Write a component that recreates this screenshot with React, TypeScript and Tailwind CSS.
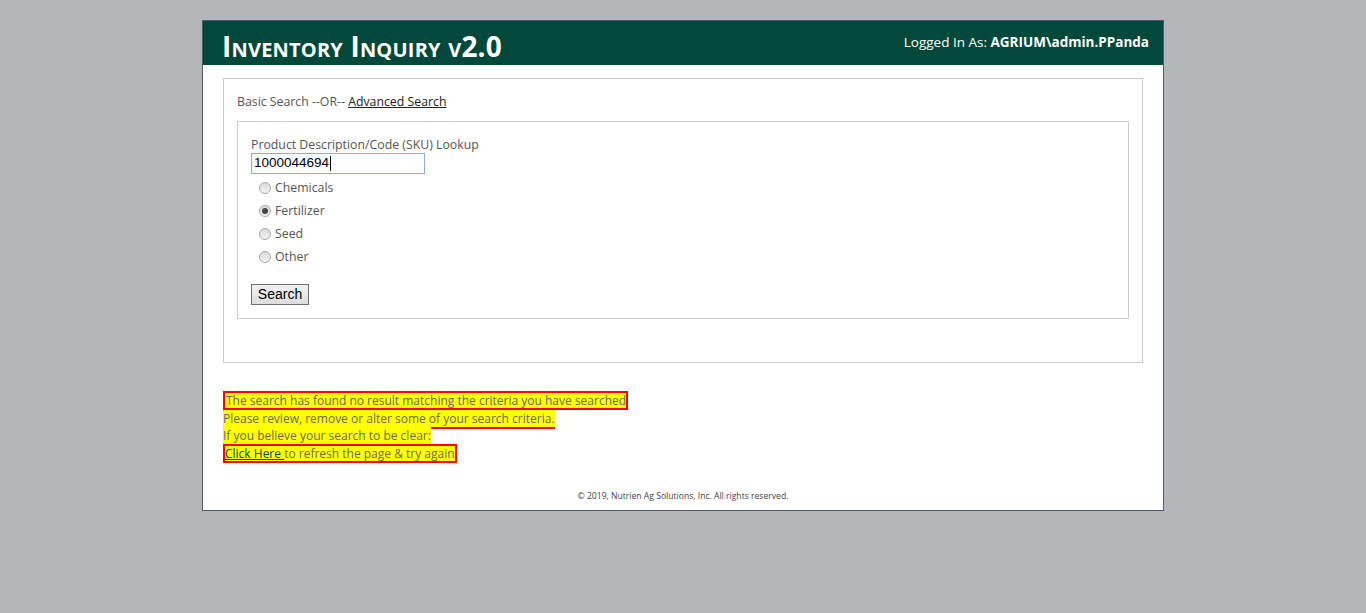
import React from 'react';

const options = ['Chemicals', 'Fertilizer', 'Seed', 'Other'];

const Radio = ({ checked }: { checked: boolean }) => (
  <span className="inline-flex h-[12px] w-[12px] items-center justify-center rounded-full border border-[#a8a8a8] bg-gradient-to-b from-[#d9d9d9] to-[#f4f4f4]">
    {checked && <span className="h-[6px] w-[6px] rounded-full bg-[#444]" />}
  </span>
);

export default function App() {
  return (
    <div className="min-h-[613px] bg-[#b5b6ba] pt-[20px] font-['Open_Sans',sans-serif]">
      <div className="mx-auto w-[962px] border border-[#4b5d76] bg-white">
        {/* header */}
        <div className="flex h-[44px] items-start justify-between bg-[#00483a] pl-[19px] pr-[14px] text-white">
          <h1 className="mt-[9px] text-[28px] font-bold leading-[32px] tracking-[0.2px] [font-variant:small-caps]">
            Inventory Inquiry v2.0
          </h1>
          <div className="mt-[11px] text-[13.5px] leading-[20px]">
            Logged In As: <span className="font-bold">AGRIUM\admin.PPanda</span>
          </div>
        </div>

        <div className="px-[20px] pt-[13px]">
          <div className="h-[285px] border border-[#cccccc] px-[13px] pt-[13px] text-[12.3px] text-[#555]">
            <div className="h-[29px] leading-[20px]">
              Basic Search --OR--{' '}
              <a className="text-[#222] underline">Advanced Search</a>
            </div>
            <div className="h-[198px] border border-[#cccccc] px-[13px] pt-[14px]">
              <div className="leading-[17px]">Product Description/Code (SKU) Lookup</div>
              <div className="flex h-[21px] w-[174px] items-center border border-[#7eb4ea] px-[2px] font-['Liberation_Sans',sans-serif] text-[13.5px] text-black">
                1000044694<span className="ml-[1px] h-[15px] w-px bg-black" />
              </div>
              <div className="mt-[2px] flex flex-col pl-[8px]">
                {options.map((o) => (
                  <label key={o} className="flex h-[23px] items-center gap-[4px]">
                    <Radio checked={o === 'Fertilizer'} />
                    <span className="pt-[1px]">{o}</span>
                  </label>
                ))}
              </div>
              <button className="mt-[16px] h-[21px] w-[58px] border border-[#707070] bg-gradient-to-b from-[#f2f2f2] to-[#dddddd] font-['Liberation_Sans',sans-serif] text-[14px] leading-[19px] text-black">
                Search
              </button>
            </div>
          </div>
        </div>

        {/* no-result message */}
        <div className="mt-[28px] px-[20px] text-[12px] leading-[17px] text-[#6b6b55]">
          <div>
            <span className="inline-block border-2 border-[#ff0000] bg-[#ffff00] pl-[1px] leading-[15px]">
              The search has found no result matching the criteria you have searched
            </span>
          </div>
          <div>
            <span className="border-b-2 border-[#ff0000] bg-[#ffff00]">
              Please review, remove or alter some of your search criteria.
            </span>
          </div>
          <div>
            <span className="bg-[#ffff00]">If you believe your search to be clear:</span>
          </div>
          <div>
            <span className="inline-block border-2 border-[#ff0000] bg-[#ffff00] leading-[15px]">
              <a className="text-[#00483a] underline">Click Here </a> to refresh the page &amp; try again
            </span>
          </div>
        </div>

        <div className="pb-[8px] pt-[27px] text-center text-[8.6px] leading-[12px] text-[#444]">
          © 2019, Nutrien Ag Solutions, Inc. All rights reserved.
        </div>
      </div>
    </div>
  );
}
